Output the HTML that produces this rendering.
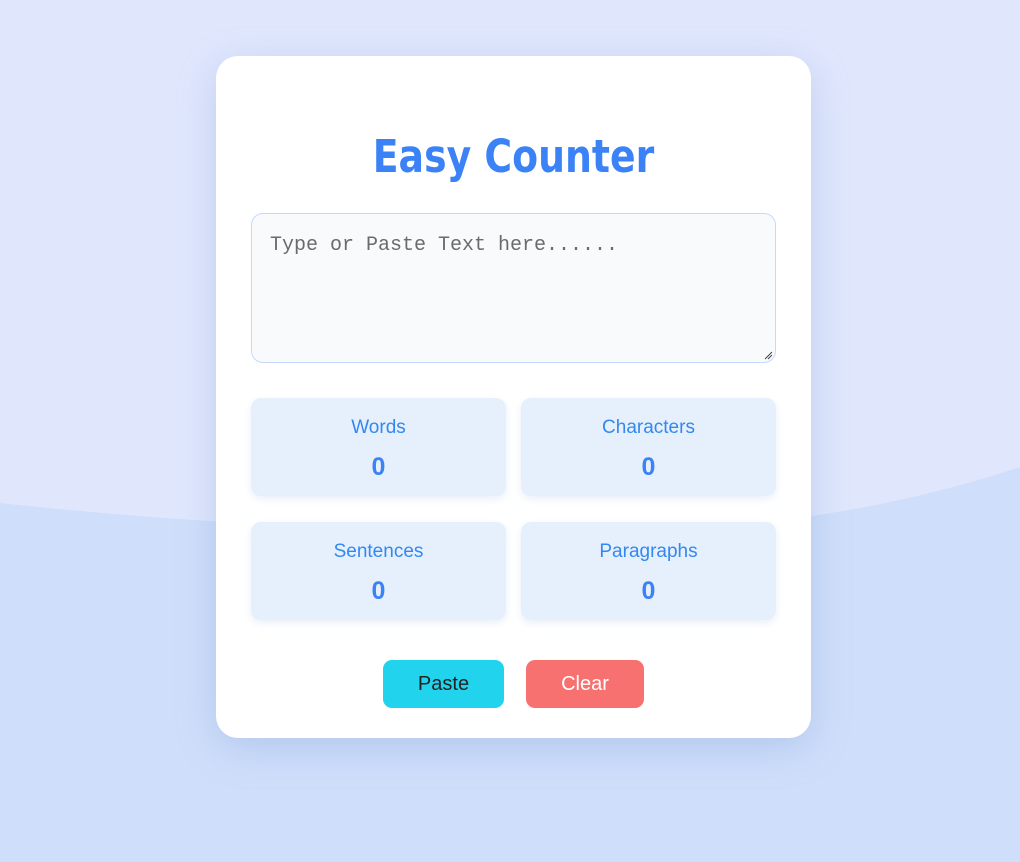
<!DOCTYPE html>
<html><head><style>
html,body{margin:0;padding:0;width:1020px;height:862px;overflow:hidden;font-family:"Liberation Sans",sans-serif;}
body{position:relative;background:#cfdffb;}
svg.bg{position:absolute;left:0;top:0}
.card{position:absolute;left:216px;top:56px;width:595px;height:682px;background:#fff;border-radius:22px;box-shadow:0 10px 40px rgba(100,130,200,0.25);}
h1{position:absolute;left:0;width:595px;top:78px;margin:0;text-align:center;font-size:45px;line-height:46px;font-weight:bold;color:#3b82f6;font-family:"DejaVu Sans","Liberation Sans",sans-serif;transform:scaleX(0.84);}
.ta{position:absolute;left:35px;top:157px;width:523px;height:148px;background:#f8fafc;border:1px solid #c7d7fe;border-radius:12px;}
.ph{position:absolute;left:18px;top:20px;font-family:"Liberation Mono","DejaVu Sans Mono",monospace;font-size:20px;color:#6b6b6b;}
.st{position:absolute;width:255px;height:98px;background:#e6f0fc;border-radius:10px;text-align:center;color:#3b82f6;box-shadow:0 3px 8px rgba(200,215,240,0.4)}
.st .l{position:absolute;top:19px;width:100%;font-size:19px;color:#3388f0}
.st .n{position:absolute;top:55px;width:100%;font-size:25px;font-weight:bold}
.btn{position:absolute;top:604px;height:48px;border-radius:9px;font-size:20px;line-height:48px;text-align:center}
</style></head><body>
<svg class="bg" width="1020" height="862"><path d="M0 0H1020V467Q800 540 520 532Q250 530 0 503Z" fill="#e0e7fd"/></svg>
<div class="card">
<h1>Easy Counter</h1>
<div class="ta"><div class="ph">Type or Paste Text here......</div>
<svg style="position:absolute;right:2px;bottom:2px" width="9" height="9"><path d="M1 8L8 1M4 8L8 4" stroke="#444" stroke-width="1"/></svg></div>
<div class="st" style="left:35px;top:342px"><div class="l">Words</div><div class="n">0</div></div>
<div class="st" style="left:305px;top:342px"><div class="l">Characters</div><div class="n">0</div></div>
<div class="st" style="left:35px;top:466px"><div class="l">Sentences</div><div class="n">0</div></div>
<div class="st" style="left:305px;top:466px"><div class="l">Paragraphs</div><div class="n">0</div></div>
<div class="btn" style="left:167px;width:121px;background:#22d3ee;color:#222">Paste</div>
<div class="btn" style="left:310px;width:118px;background:#f87171;color:#fff">Clear</div>
</div>
</body></html>
